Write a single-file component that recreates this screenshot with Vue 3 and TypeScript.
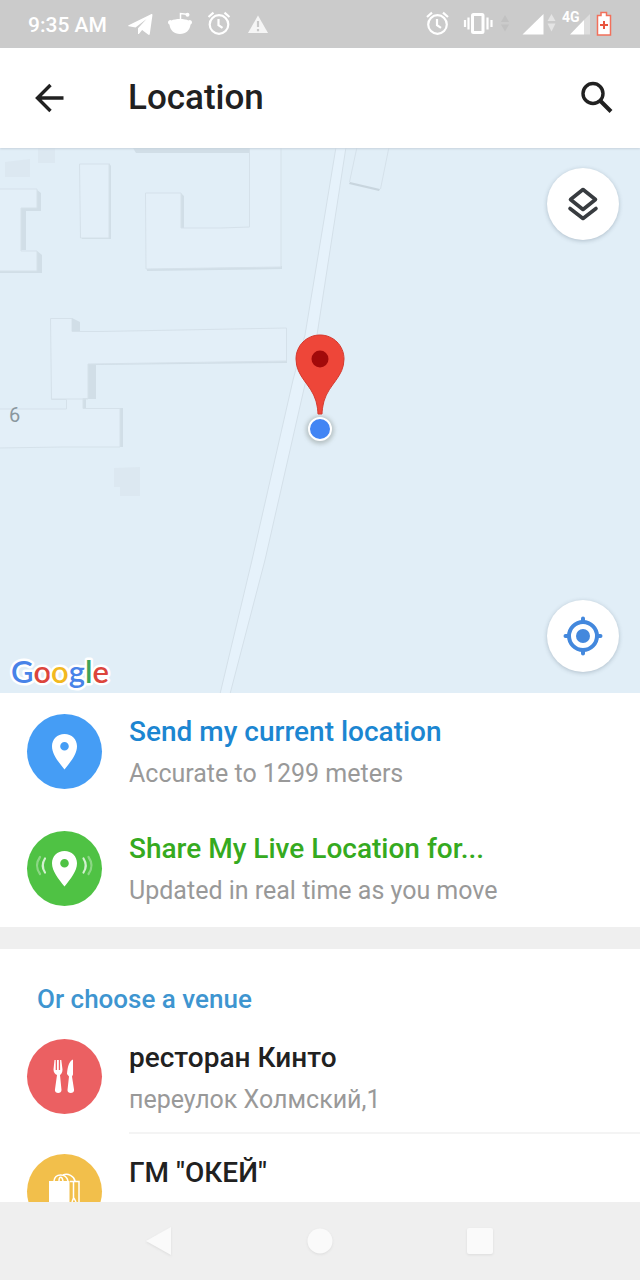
<script setup lang="ts">
interface Action {
  id: string
  title: string
  detail: string
  live: boolean
}

interface Venue {
  id: string
  name: string
  address?: string
  kind: 'food' | 'shop'
}

const actions: Action[] = [
  { id: 'send', title: 'Send my current location', detail: 'Accurate to 1299 meters', live: false },
  { id: 'live', title: 'Share My Live Location for...', detail: 'Updated in real time as you move', live: true },
]

const venues: Venue[] = [
  { id: 'kinto', name: 'ресторан Кинто', address: 'переулок Холмский,1', kind: 'food' },
  { id: 'okey', name: 'ГМ "ОКЕЙ"', kind: 'shop' },
]
</script>

<template>
  <div class="screen">
    <div class="status">
      <span class="time">9:35 AM</span>
      <div class="notices">
        <svg width="26" height="26" viewBox="0 0 26 26"><path d="M.6 14.200 23 3.200c1-.4 1.600.1 1.400 1.200L21.800 23c-.2 1-.9 1.200-1.700.6l-6-4.500-3.200 3.800c-.5.4-.9.200-.9-.4v-5.200L18.500 8 7.500 16.600.8 15.300c-.7-.2-.8-.8-.2-1.100Z" fill="#fff" /></svg>
        <svg width="26" height="26" viewBox="0 0 26 26">
          <path d="M4.500 9.500C8 7.500 18 7.500 21.500 9.500c1.200-1.300 3.700 0 3.500 2-.1 1.200-1 1.800-1.500 2.200-.7 5.300-4.500 9.300-10.500 9.300S3.200 19 2.500 13.700C2 13.300 1 12.700 1 11.500c-.1-2 2.300-3.300 3.500-2Z" fill="#fff" />
          <path d="M13.500 8.500v-6l6 .8" fill="none" stroke="#fff" stroke-width="1.500" /><circle cx="20.500" cy="3.700" r="2" fill="#fff" />
        </svg>
        <svg width="26" height="26" viewBox="0 0 26 26"><g fill="none" stroke="#fff" stroke-width="2.200"><circle cx="13" cy="13.500" r="9.300" /><path d="M12.500 8v6.200l4 2.600M2.500 6l5-4.300M23.500 6l-5-4.300" /></g></svg>
        <svg width="26" height="26" viewBox="0 0 26 26"><path d="M13 4.500 23 22H3Z" fill="#f5f5f5" /><path d="M13 10v6M13 18v2.200" stroke="#c9c9c9" stroke-width="2.200" /></svg>
      </div>
      <div class="signals">
        <svg width="30" height="26" viewBox="0 0 30 26"><g fill="none" stroke="#fff" stroke-width="2.200"><circle cx="11.500" cy="13.500" r="9.300" /><path d="M11 8v6.200l4 2.600M1 6l5-4.300M22 6l-5-4.300" /></g></svg>
        <svg width="48" height="26" viewBox="0 0 48 26">
          <rect x="10.500" y="3.500" width="10.500" height="18" rx="1" fill="none" stroke="#fff" stroke-width="3" />
          <path d="M3 9v7M6.500 6.500v12M25.500 6.500v12M29.500 9v7" stroke="#fff" stroke-width="2.200" />
          <path d="m39 11 4-7 4 7ZM39 13.500l4 7 4-7Z" fill="#c1c1c1" />
        </svg>
        <svg width="40" height="26" viewBox="0 0 40 26"><path d="M6.500 23.500 27.500 3v20.500Z" fill="#fff" /><path d="m31.500 10 4-7 4 7ZM31.500 12.500l4 8 4-8Z" fill="#e4e4e4" /></svg>
        <svg width="28" height="32" viewBox="0 0 28 32">
          <path d="M22 12 28 6v20.500h-6Z" fill="#dedede" /><path d="M8 26.500 22 12v14.500Z" fill="#fff" />
          <text x="0" y="14" class="network">4G</text>
        </svg>
        <svg width="16" height="26" viewBox="0 0 16 26"><path d="M1.500 4.500h3.500v-3h5.500v3H14.500v19.500h-13Z" fill="#fff" stroke="#f2705b" stroke-width="1.500" /><path d="M8 10v8M4 14h8" stroke="#e8553f" stroke-width="2" /></svg>
      </div>
    </div>

    <header class="bar">
      <button class="tool" aria-label="Back">
        <svg width="32" height="32" viewBox="0 0 32 32"><path d="M30.500 16H5M17.500 3 4.500 16 17.500 29" fill="none" stroke="#212121" stroke-width="3.400" /></svg>
      </button>
      <h1>Location</h1>
      <button class="tool" aria-label="Search">
        <svg width="34" height="34" viewBox="0 0 34 34"><circle cx="14" cy="12.500" r="10" fill="none" stroke="#212121" stroke-width="3.400" /><path d="m21 19.500 11 11" stroke="#212121" stroke-width="4" /></svg>
      </button>
    </header>

    <section class="map" aria-label="Map">
      <svg class="canvas" viewBox="0 0 640 545" preserveAspectRatio="xMidYMid slice">
        <defs>
          <filter id="soft" x="-50%" y="-50%" width="200%" height="200%"><feGaussianBlur stdDeviation="2" /></filter>
        </defs>
        <g fill="#dce8f1">
          <path d="M5 14 30 11V29H5ZM38 0H55V15H38Z" />
          <path d="M114 320 140 319V348H120V339H114Z" />
        </g>
        <g fill="#d1dee7">
          <path d="M133 0H249V5H136Z" />
          <path d="M37 42 41 45V63H26V102H21V60H37ZM37 103 42 107V125H0V123H37Z" />
          <path d="M109 15 111 18V91H82V90H109ZM181 45 184 48V80H181ZM147 120 282 118V121L147 123Z" />
          <path d="M88 216 287 213V215L96 217V251H88ZM83 251H86V260H83ZM120 260H123V299H120Z" />
        </g>
        <g fill="#e3eff8" stroke="#d5e1ea" stroke-width="1">
          <path d="M-2 41H37V60H21V103H37V123H-2Z" />
          <path d="M79.500 16H109V90H80.500Z" />
          <path d="M145.500 45H181V80H221L249.500 79V-2H281V119L146 121Z" />
          <path d="M50.500 170.500H72V183.500H100L286.500 180V213L88 216V250.500H83V260.500H120V299H62L-2 300V261H66.500V251.500H51.500Z" />
          <path d="M51.500 251H88" />
          <path d="M357-1 349.500 34M389-1 380.500 41" fill="none" />
        </g>
        <path d="M72 170 80 174V183H72Z" fill="#d1dee7" />
        <path d="m350 34 30 7-1 2-30-7Z" fill="#c8d5de" />
        <path d="M336-1 305 187 293 232 252 412 220 546H230L265 412 306 232 317 187 346-1Z" fill="#e6f2fb" stroke="#d4e0e9" />
        <text x="9" y="274" class="house">6</text>
        <circle cx="320" cy="282" r="14" fill="#788078" opacity="0.400" filter="url(#soft)" />
        <circle cx="320" cy="281" r="11" fill="#4285f4" stroke="#fff" stroke-width="2" />
        <path d="M320 187C306.500 187 296 197.700 296 211C296 229 311 236 316 253C317.500 259 317.800 262 318 266H322C322.200 262 322.500 259 324 253C329 236 344 229 344 211C344 197.700 333.500 187 320 187Z" fill="#ee4639" stroke="#d43a2f" stroke-width="1" />
        <circle cx="320" cy="211" r="8.500" fill="#a20a0a" />
      </svg>
      <svg class="brand" width="110" height="46" viewBox="0 0 110 46">
        <text x="5" y="36"><tspan fill="#4883e8">G</tspan><tspan fill="#dc453c">o</tspan><tspan fill="#f2b91f">o</tspan><tspan fill="#4883e8">g</tspan><tspan fill="#3da45a">l</tspan><tspan fill="#dc453c">e</tspan></text>
      </svg>
      <button class="round layers" aria-label="Map layers">
        <svg width="34" height="36" viewBox="0 0 34 36"><path d="M17 3.500 29.500 13.500 17 23.500 4.500 13.500ZM4 22.500 17 32.500 30 22.500" fill="none" stroke="#383c40" stroke-width="3.600" stroke-linejoin="round" stroke-linecap="round" /></svg>
      </button>
      <button class="round locate" aria-label="My location">
        <svg width="40" height="40" viewBox="0 0 40 40"><circle cx="20" cy="20" r="14" fill="none" stroke="#4388dd" stroke-width="4" /><circle cx="20" cy="20" r="7" fill="#4388dd" /><path d="M20 2.500V6M20 34v3.500M2.500 20H6M34 20h3.500" stroke="#4388dd" stroke-width="4" stroke-linecap="round" /></svg>
      </button>
    </section>

    <section class="actions">
      <button v-for="a in actions" :key="a.id" class="row" :class="{ live: a.live }">
        <span class="badge">
          <svg width="75" height="75" viewBox="0 0 75 75">
            <path fill-rule="evenodd" d="M37.500 20C30.200 20 25 25.400 25 32.200 25 40 31.500 48 37.500 55.500 43.500 48 50 40 50 32.200 50 25.400 44.800 20 37.500 20Zm0 8a4.300 4.300 0 1 1 0 8.600 4.300 4.300 0 0 1 0-8.600Z" fill="#fff" />
            <g v-if="a.live" fill="none" stroke="#fff" stroke-width="2.200" stroke-linecap="round">
              <path d="M18 27.500q-4.500 7 0 14M56.500 27.500q4.500 7 0 14" opacity="0.750" />
              <path d="M13 26q-6 8.500 0 17M61.500 26q6 8.500 0 17" opacity="0.350" />
            </g>
          </svg>
        </span>
        <span class="copy"><span class="title">{{ a.title }}</span><span class="detail">{{ a.detail }}</span></span>
      </button>
    </section>

    <section class="venues">
      <h2>Or choose a venue</h2>
      <button v-for="v in venues" :key="v.id" class="row venue" :class="v.kind">
        <span class="badge">
          <svg v-if="v.kind === 'food'" width="75" height="75" viewBox="0 0 75 75" fill="#fff">
            <path d="M27.500 21h1.200v10h1.300V21h1.800v10h1.300V21h1.200l1.200 9.500c0 3-1.200 4.500-2.500 5.500l1.500 15c.2 4-6.800 4-6.600 0L30 36C28 35 26.500 33.500 26.500 30.500Z" />
            <path d="M46 20.500V35.500l-1 2 2.100 13.500c.3 4-7 4-6.600 0L42 37.500 40 35C40.500 28 42 22 46 20.500Z" />
          </svg>
          <svg v-else width="75" height="75" viewBox="0 0 75 75">
            <path d="M22 27H42.500V56H22Z" fill="#fff" />
            <g fill="none" stroke="#fff" stroke-width="1.500"><path d="M43 27.500H52V55H43M46.500 28V44l-1.500 4M47 44l2 4M27 27c1-8 12-8 14 0M32 27c0-5 3-5 4 0M36 21c5-2 11 1 12 6" /></g>
          </svg>
        </span>
        <span class="copy"><span class="title">{{ v.name }}</span><span v-if="v.address" class="detail">{{ v.address }}</span></span>
      </button>
    </section>

    <nav class="system" aria-label="System">
      <button aria-label="Back"><svg width="32" height="32" viewBox="0 0 32 32"><path d="M2 16 27 2V30Z" /></svg></button>
      <button aria-label="Home"><svg width="32" height="32" viewBox="0 0 32 32"><circle cx="16" cy="16" r="12.500" /></svg></button>
      <button aria-label="Recent apps"><svg width="32" height="32" viewBox="0 0 32 32"><rect x="3" y="3" width="26" height="26" rx="2" /></svg></button>
    </nav>
  </div>
</template>

<style>
body {
  margin: 0;
}
</style>

<style scoped>
.screen {
  display: flex;
  flex-direction: column;
  height: 100vh;
  overflow: hidden;
  background: #fff;
  color: #212121;
  font-family: Roboto, "Noto Sans", sans-serif;
}
svg {
  display: block;
  flex: none;
}
button {
  margin: 0;
  padding: 0;
  border: 0;
  background: none;
  color: inherit;
  font: inherit;
  text-align: left;
}
.status {
  display: flex;
  flex: none;
  align-items: center;
  height: 48px;
  padding: 0 28px;
  background: #cbcbcb;
  color: #fff;
}
.time {
  margin-right: 21px;
  padding-top: 2px;
  font-size: 21px;
  line-height: 26px;
  font-weight: 500;
}
.notices {
  display: flex;
  gap: 13px;
}
.signals {
  display: flex;
  align-items: center;
  gap: 6px;
  margin-left: auto;
}
.network {
  fill: #fff;
  font-size: 14px;
  font-weight: 700;
}
.bar {
  position: relative;
  z-index: 1;
  display: flex;
  flex: none;
  align-items: center;
  height: 100px;
  padding: 0 20px 0 25px;
  background: #fff;
  box-shadow: 0 1px 2px #c6d2dc;
}
.tool {
  display: grid;
  place-items: center;
  width: 48px;
  height: 48px;
}
h1 {
  flex: 1;
  margin: 0 0 0 55px;
  font-size: 35px;
  line-height: 44px;
  font-weight: 500;
}
.map {
  position: relative;
  flex: 545 1 0;
  min-height: 0;
  overflow: hidden;
  background: #e1eef7;
}
.canvas {
  width: 100%;
  height: 100%;
}
.house {
  fill: #8a979f;
  font-size: 20px;
}
.brand {
  position: absolute;
  left: 6px;
  bottom: 0;
  font-family: Lato, sans-serif;
  font-size: 31px;
  font-weight: 600;
}
.brand text {
  stroke: #fff;
  stroke-width: 5px;
  stroke-linejoin: round;
  paint-order: stroke;
}
.round {
  position: absolute;
  right: 21px;
  display: grid;
  place-items: center;
  width: 72px;
  height: 72px;
  border-radius: 50%;
  background: #fff;
  box-shadow: 0 1px 4px rgba(60, 80, 100, 0.300);
}
.layers {
  top: 20px;
}
.locate {
  bottom: 21px;
}
.actions {
  flex: none;
}
.row {
  display: flex;
  align-items: center;
  gap: 27px;
  box-sizing: border-box;
  width: 100%;
  height: 117px;
  padding-left: 27px;
  color: #1c86d1;
}
.live {
  color: #35aa20;
}
.badge {
  flex: none;
  width: 75px;
  height: 75px;
  border-radius: 50%;
  background: #459df5;
}
.live .badge {
  background: #4fc244;
}
.copy {
  display: flex;
  flex: 1;
  flex-direction: column;
  min-width: 0;
  padding-top: 2px;
}
.title {
  font-size: 28px;
  line-height: 42px;
  font-weight: 500;
}
.detail {
  color: #999;
  font-size: 25px;
  line-height: 42px;
}
.venues {
  flex: 253 1 0;
  min-height: 0;
  overflow: hidden;
  border-top: 22px solid #efefef;
}
h2 {
  margin: 0;
  padding: 30px 37px 0;
  color: #3e95d0;
  font-size: 26px;
  line-height: 40px;
  font-weight: 500;
}
.venue {
  align-items: flex-start;
  height: 115px;
  color: #212121;
}
.venue .badge {
  margin-top: 20px;
  background: #eb6062;
}
.shop .badge {
  background: #f2bf4b;
}
.venue .copy {
  box-sizing: border-box;
  height: 115px;
  padding-top: 18px;
  border-bottom: 2px solid #f4f4f4;
}
.system {
  display: flex;
  flex: none;
  justify-content: center;
  height: 78px;
  background: #efefef;
}
.system button {
  display: grid;
  place-items: center;
  width: 25%;
}
.system svg {
  fill: #fafafa;
  filter: drop-shadow(0 1px 1px #dcdcdc);
}
</style>
